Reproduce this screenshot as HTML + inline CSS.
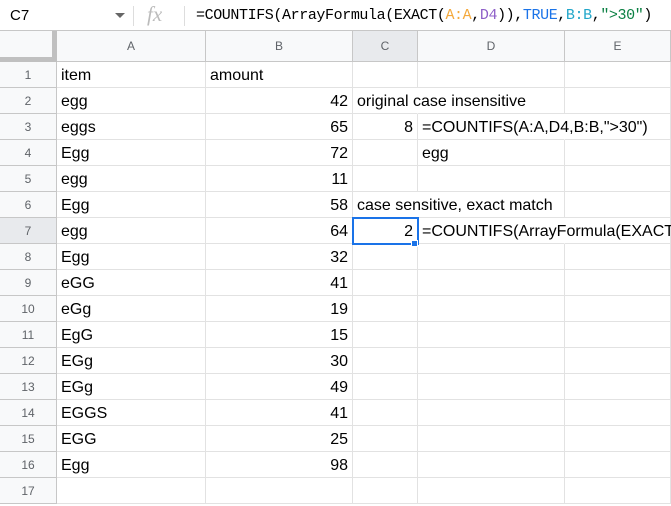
<!DOCTYPE html>
<html><head><style>
*{margin:0;padding:0;box-sizing:border-box}
html,body{width:671px;height:506px;overflow:hidden}
body{background:#fff;font-family:"Liberation Sans",Arial,sans-serif;position:relative}
.wrap{position:absolute;left:0;top:0;width:671px;height:506px;overflow:hidden}
.fb{position:absolute;left:0;top:0;width:671px;height:31px;border-bottom:1px solid #c7c7c7;background:#fff}
.abs{position:absolute}
.hdr{position:absolute;top:31px;height:31px;background:#f8f9fa;border-right:1px solid #c7c7c7;border-bottom:1px solid #c7c7c7;color:#5f6368;font-size:12px;text-align:center;line-height:30px}
.rh{position:absolute;left:0;width:57px;height:26px;background:#f8f9fa;border-right:1px solid #c7c7c7;border-bottom:1px solid #c7c7c7;color:#5f6368;font-size:12px;text-align:center;line-height:26px}
.c{position:absolute;height:26px;border-right:1px solid #e2e2e2;border-bottom:1px solid #e2e2e2;font-size:16px;line-height:27px;padding:0 4px;white-space:nowrap;color:#000}
.r{text-align:right}
.ov{border-right-color:transparent;overflow:visible}
</style></head><body><div class="wrap">
<div class="fb">
<div class="abs" style="left:10px;top:7px;font-size:15px;">C7</div>
<div class="abs" style="left:115px;top:13px;width:0;height:0;border-left:5px solid transparent;border-right:5px solid transparent;border-top:5px solid #666"></div>
<div class="abs" style="left:133px;top:6px;width:1px;height:20px;background:#ddd"></div>
<div class="abs" style="left:147px;top:2px;font-family:'Liberation Serif',serif;font-style:italic;font-size:21px;color:#bbb">fx</div>
<div class="abs" style="left:184px;top:6px;width:1px;height:20px;background:#ddd"></div>
<div class="abs" style="left:196px;top:7px;font-family:'Liberation Mono',monospace;font-size:15px;letter-spacing:-0.4px;color:#000;white-space:nowrap">=COUNTIFS(ArrayFormula(EXACT(<span style="color:#f4a93c">A:A</span>,<span style="color:#8e5fc8">D4</span>)),<span style="color:#1a73e8">TRUE</span>,<span style="color:#21a6c9">B:B</span>,<span style="color:#0b8043">"&gt;30"</span>)</div>
</div>
<div class="hdr" style="left:0;width:57px;border-right:5px solid #c0c0c0;border-bottom:5px solid #c0c0c0"></div>
<div class="hdr" style="left:57px;width:149px">A</div>
<div class="hdr" style="left:206px;width:147px">B</div>
<div class="hdr" style="left:353px;width:65px;background:#e8eaed">C</div>
<div class="hdr" style="left:418px;width:147px">D</div>
<div class="hdr" style="left:565px;width:106px">E</div>
<div id="g"></div>
<div class="abs" style="left:352px;top:217px;width:67px;height:28px;border:2px solid #1a73e8;z-index:5"></div>
<div class="abs" style="left:411px;top:240px;width:7px;height:7px;background:#1a73e8;border:1px solid #fff;z-index:6"></div>
</div>
<script>
var A=["item","egg","eggs","Egg","egg","Egg","egg","Egg","eGG","eGg","EgG","EGg","EGg","EGGS","EGG","Egg",""];
var B=["amount","42","65","72","11","58","64","32","41","19","15","30","49","41","25","98",""];
var h="";
for(var i=0;i<17;i++){var t=62+i*26;
h+='<div class="rh" style="top:'+t+'px;'+(i==6?'background:#e8eaed':'')+'">'+(i+1)+'</div>';
h+='<div class="c" style="left:57px;width:149px;top:'+t+'px">'+A[i]+'</div>';
h+='<div class="c'+(i>0?' r':'')+'" style="left:206px;width:147px;top:'+t+'px">'+B[i]+'</div>';
var C="",D="",cc="",dc="";
if(i==1){C="original case insensitive";cc=" ov";}
if(i==2){C="8";D="=COUNTIFS(A:A,D4,B:B,\">30\")";dc=" ov";}
if(i==3){D="egg";}
if(i==5){C="case sensitive, exact match";cc=" ov";}
if(i==6){C="2";D="=COUNTIFS(ArrayFormula(EXACT(A:A,D4)),TRUE,B:B,\">30\")";dc=" ov";}
h+='<div class="c'+((i==2||i==6)?' r':'')+cc+'" style="left:353px;width:65px;top:'+t+'px;z-index:2">'+C+'</div>';
h+='<div class="c'+dc+'" style="left:418px;width:147px;top:'+t+'px;z-index:2">'+D+'</div>';
h+='<div class="c" style="left:565px;width:106px;top:'+t+'px"></div>';}
document.getElementById('g').innerHTML=h;
</script>
</body></html>
